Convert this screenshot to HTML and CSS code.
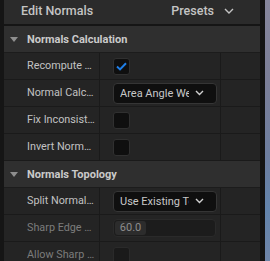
FILE: index.html
```html
<!DOCTYPE html>
<html>
<head>
<meta charset="utf-8">
<link rel="stylesheet" href="styles.css">
</head>
<body>
<div class="app">
  <div class="panel">
    <div class="titlebar">
      <span class="title">Edit Normals</span>
      <span class="presets">Presets
        <svg class="chev-lg" width="10" height="6" viewBox="0 0 10 6"><path d="M1 1 L5 5 L9 1" fill="none" stroke="#c4c4c4" stroke-width="1.4"/></svg>
      </span>
    </div>

    <div class="section"><span class="tri"></span>Normals Calculation</div>
    <div class="row">
      <div class="name">Recompute Normals</div>
      <div class="value"><span class="check"><svg width="11" height="9" viewBox="0 0 11 9"><path d="M1 4.6 L4 7.4 L10 1.2" fill="none" stroke="#1f7fe8" stroke-width="2"/></svg></span></div>
      <div class="extra"></div>
    </div>
    <div class="row">
      <div class="name">Normal Calculation Method</div>
      <div class="value"><span class="combo"><span class="combo-text">Area Angle Weighted</span><svg width="9" height="6" viewBox="0 0 9 6"><path d="M1 1 L4.5 4.5 L8 1" fill="none" stroke="#d0d0d0" stroke-width="1.4"/></svg></span></div>
      <div class="extra"></div>
    </div>
    <div class="row">
      <div class="name">Fix Inconsistent Normals</div>
      <div class="value"><span class="check"></span></div>
      <div class="extra"></div>
    </div>
    <div class="row">
      <div class="name">Invert Normals</div>
      <div class="value"><span class="check"></span></div>
      <div class="extra"></div>
    </div>

    <div class="section"><span class="tri"></span>Normals Topology</div>
    <div class="row">
      <div class="name">Split Normal Method</div>
      <div class="value"><span class="combo"><span class="combo-text">Use Existing Topology</span><svg width="9" height="6" viewBox="0 0 9 6"><path d="M1 1 L4.5 4.5 L8 1" fill="none" stroke="#d0d0d0" stroke-width="1.4"/></svg></span></div>
      <div class="extra"></div>
    </div>
    <div class="row">
      <div class="name dim">Sharp Edge Angle</div>
      <div class="value"><span class="num"><span class="num-chip">60.0</span></span></div>
      <div class="extra"></div>
    </div>
    <div class="row">
      <div class="name dim">Allow Sharp Vertices</div>
      <div class="value"><span class="check dimbox"></span></div>
      <div class="extra"></div>
    </div>
  </div>
  <div class="gutter"></div>
  <div class="viewport"></div>
</div>
</body>
</html>
```
FILE: styles.css
```css
html, body {
  margin: 0;
  padding: 0;
  background: #151515;
  overflow: hidden;
}
.app {
  display: flex;
  width: 270px;
  height: 261px;
  padding-left: 4px;
  box-sizing: border-box;
  background: #151515;
  font-family: Roboto, "Liberation Sans", sans-serif;
}
.panel {
  width: 256px;
  flex: none;
  display: flex;
  flex-direction: column;
  overflow: hidden;
}
.gutter {
  width: 5px;
  flex: none;
  background: #141414;
}
.viewport {
  flex: 1;
  background: linear-gradient(180deg, #86869c 0%, #7c7f98 30%, #6d7ea0 60%, #6384ac 80%, #6f85a8 100%);
}
.titlebar {
  flex: none;
  background: #2b2b2b;
  border-bottom: 2px solid #151515;
  display: flex;
  align-items: center;
  justify-content: space-between;
  padding: 0 26px 3px 17px;
  box-sizing: content-box;
  height: 21px;
  color: #c4c4c4;
  font-size: 12.5px;
  font-weight: 500;
}
.presets {
  display: flex;
  align-items: center;
  gap: 10px;
}
.section {
  height: 26px;
  flex: none;
  background: #2f2f2f;
  border-bottom: 1px solid #1c1c1c;
  display: flex;
  align-items: center;
  color: #cacaca;
  font-size: 11px;
  font-weight: 700;
  padding-left: 6px;
}
.tri {
  width: 0;
  height: 0;
  border-left: 4px solid transparent;
  border-right: 4px solid transparent;
  border-top: 5px solid #8e8e8e;
  margin-right: 9px;
}
.row {
  height: 26px;
  flex: none;
  display: flex;
  background: #242424;
  border-bottom: 1px solid #1a1a1a;
}
.name {
  width: 96px;
  flex: none;
  box-sizing: border-box;
  border-right: 1px solid #1a1a1a;
  padding: 0 4px 0 23px;
  color: #c2c2c2;
  font-size: 10.8px;
  line-height: 26px;
  white-space: nowrap;
  overflow: hidden;
  text-overflow: ellipsis;
}
.name.dim {
  color: #7c7c7c;
}
.value {
  width: 121px;
  flex: none;
  box-sizing: border-box;
  border-right: 1px solid #1a1a1a;
  display: flex;
  align-items: center;
  padding-left: 13px;
}
.extra {
  flex: 1;
}
.check {
  width: 17px;
  height: 17px;
  box-sizing: border-box;
  background: #0f0f0f;
  border: 1px solid #303030;
  border-radius: 3px;
  display: flex;
  align-items: center;
  justify-content: center;
}
.check.dimbox {
  background: #1a1a1a;
  border-color: #2a2a2a;
}
.combo {
  width: 104px;
  height: 21px;
  box-sizing: border-box;
  background: #0f0f0f;
  border: 1px solid #353535;
  border-radius: 4px;
  display: flex;
  align-items: center;
  padding: 0 12px 0 6px;
  gap: 6px;
}
.combo-text {
  flex: 1;
  overflow: hidden;
  white-space: nowrap;
  color: #c8c8c8;
  font-size: 11px;
}
.num {
  width: 103px;
  height: 18px;
  box-sizing: border-box;
  background: #1c1c1c;
  border: 1px solid #2a2a2a;
  border-radius: 4px;
  display: flex;
  align-items: center;
  padding-left: 1px;
}
.num-chip {
  width: 31px;
  height: 14px;
  background: #2c2c2c;
  border-radius: 3px;
  color: #8c8c8c;
  font-size: 11px;
  line-height: 14px;
  text-align: center;
}
```
